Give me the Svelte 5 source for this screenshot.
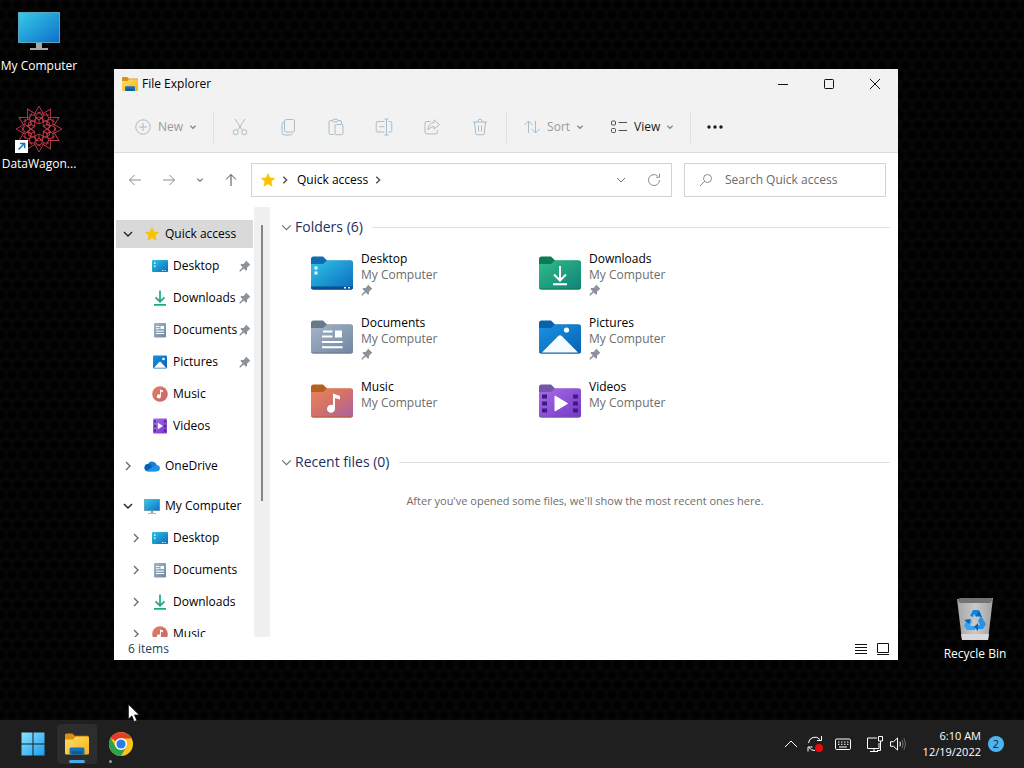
<script lang="ts">
  interface NavItem {
    label: string;
    icon: string;
    root?: boolean;
    arrow?: "open" | "closed";
    pinned?: boolean;
    selected?: boolean;
  }

  const navItems: NavItem[] = [
    { label: "Quick access", icon: "star", root: true, arrow: "open", selected: true },
    { label: "Desktop", icon: "desktop", pinned: true },
    { label: "Downloads", icon: "downloads", pinned: true },
    { label: "Documents", icon: "documents", pinned: true },
    { label: "Pictures", icon: "pictures", pinned: true },
    { label: "Music", icon: "music" },
    { label: "Videos", icon: "videos" },
    { label: "OneDrive", icon: "onedrive", root: true, arrow: "closed" },
    { label: "My Computer", icon: "computer", root: true, arrow: "open" },
    { label: "Desktop", icon: "desktop", arrow: "closed" },
    { label: "Documents", icon: "documents", arrow: "closed" },
    { label: "Downloads", icon: "downloads", arrow: "closed" },
    { label: "Music", icon: "music", arrow: "closed" },
  ];

  const folders = [
    { name: "Desktop", tab: "#0f6cae", pinned: true },
    { name: "Downloads", tab: "#0b7a55", pinned: true },
    { name: "Documents", tab: "#68798a", pinned: true },
    { name: "Pictures", tab: "#0a62ac", pinned: true },
    { name: "Music", tab: "#b5601d", pinned: false },
    { name: "Videos", tab: "#7556a5", pinned: false },
  ];

  let search = $state("");
  let active = $state(0);
</script>

{#snippet chevron(dir: string)}
  <svg class="chevron {dir}" viewBox="0 0 12 12"><path d="M2 4l4 4 4-4" /></svg>
{/snippet}

{#snippet pin()}
  <svg class="pin" viewBox="0 0 12 12">
    <path d="M7 0.5l4.5 4.5-1.3 .5-2.2 2.2 0 2.3-1 .8-2.3-2.4L1.5 11.5l-1 0 0-1L3.7 7.3 1.4 5l.8-1h2.4L6.6 1.8z" fill="#8b9299" />
  </svg>
{/snippet}

{#snippet monitor()}
  <rect x="0" y="1" width="16" height="12" rx=".6" fill="#8aa0ac" />
  <rect x=".6" y="1.5" width="14.8" height="10.9" fill="url(#g-screen)" />
  <path d="M6.8 13h2.4v2H12v.8H4V15h2.8z" fill="#9aa0a4" />
{/snippet}

{#snippet explorer()}
  <path d="M0 3.2V2q0-1 1-1h4l1.5 1.500H15q1 0 1 1V6H0z" fill="#d9920f" />
  <path d="M0 5h5.500L7 3.200h8q1 0 1 1V14q0 1-.8 1H.8Q0 15 0 14z" fill="url(#g-yellow)" />
  <path d="M3 15v-3.700q0-1 1-1h8q1 0 1 1V15z" fill="#1672b8" />
  <path d="M4.500 12.800h7V15h-7z" fill="#0d5a98" />
{/snippet}

{#snippet smallIcon(name: string)}
  <svg class="small-icon" viewBox="0 0 16 16">
    {#if name === "star"}
      <path d="M8 1.500l1.900 4.400 4.700.4-3.500 3.200 1 4.700L8 11.800l-4.100 2.400 1-4.700L1.400 6.300l4.700-.4z" fill="#f8c301" stroke="#f8c301" stroke-width=".6" stroke-linejoin="round" />
    {:else if name === "desktop"}
      <rect y="2" width="16" height="12" rx="1" fill="url(#g-desktop)" />
      <path d="M2 4.500h1.500V6H2zM2 7.500h1.500V9H2zM10 12h1.200v1H10zM12.500 12h1.200v1h-1.200z" fill="#d8f7ff" />
    {:else if name === "downloads"}
      <path d="M8 .5v11M3.500 7.300L8 11.700l4.500-4.400M2 14.900h12" fill="none" stroke="#1caa85" stroke-width="1.700" />
    {:else if name === "documents"}
      <rect x="2" y="1" width="12" height="14.500" rx="1" fill="url(#g-documents)" />
      <path d="M4 4.500h3.500M4 6.700h3.500M4 9.200h8M4 11.500h8" stroke="#fff" />
      <rect x="8.500" y="4" width="3.500" height="3.200" fill="#fff" />
    {:else if name === "pictures"}
      <rect x="1" y="1.500" width="14" height="13" rx="1" fill="url(#g-pictures)" />
      <path d="M2 13.800l5-5.600q1-1 2 0l5 5.600z" fill="#fff" />
      <circle cx="11.500" cy="5" r="1.300" fill="#fff" />
    {:else if name === "music"}
      <circle cx="8" cy="8" r="7.800" fill="url(#g-music-small)" />
      <path d="M8 3.500l3 1v1.700L8.900 5.500v4.700a2 2 0 1 1-.9-1.500z" fill="#fff" />
    {:else if name === "videos"}
      <rect x="1" y=".5" width="14" height="15" rx="1" fill="url(#g-videos)" />
      <path d="M2.200 2.500h1.600v1.700H2.200zM2.200 7.200h1.600v1.700H2.200zM2.200 11.800h1.600v1.700H2.200zM12.200 2.500h1.600v1.700h-1.600zM12.200 7.200h1.600v1.700h-1.600zM12.200 11.800h1.600v1.700h-1.600z" fill="#3c1583" />
      <path d="M5.800 4.800l5.200 3.200-5.200 3.200z" fill="#fff" />
    {:else if name === "onedrive"}
      <path d="M4 6a4.800 4.800 0 0 1 8.800 1.300 3 3 0 0 1 0 6H3.500A3.700 3.700 0 0 1 4 6z" fill="#0f80d8" />
      <path d="M3.500 13.300A3.700 3.700 0 0 1 3.700 6q1.500-.3 3 .8l5 6.500z" fill="#0a5fb5" />
      <path d="M2 12.900l7-4.400q1.700-1 3.700-1a3 3 0 0 1 .2 5.800H3.500z" fill="#2391e6" />
    {:else if name === "computer"}
      {@render monitor()}
    {/if}
  </svg>
{/snippet}

<!-- Shared gradients for every icon on the screen. -->
<svg class="defs" width="0" height="0" aria-hidden="true">
  <defs>
    <linearGradient id="g-screen" x2="1" y2="1"><stop stop-color="#34cbe8" /><stop offset="1" stop-color="#0f6fc9" /></linearGradient>
    <linearGradient id="g-yellow" x2="1" y2="1"><stop stop-color="#ffdc6b" /><stop offset="1" stop-color="#f4b41a" /></linearGradient>
    <linearGradient id="g-desktop" x2="1" y2="1"><stop stop-color="#2fc3e6" /><stop offset="1" stop-color="#0b6cbd" /></linearGradient>
    <linearGradient id="g-downloads" x2="1" y2="1"><stop stop-color="#2dbd86" /><stop offset="1" stop-color="#128279" /></linearGradient>
    <linearGradient id="g-documents" x2="1" y2="1"><stop stop-color="#a3b5c8" /><stop offset="1" stop-color="#71869f" /></linearGradient>
    <linearGradient id="g-pictures" x2="1" y2="1"><stop stop-color="#1793e2" /><stop offset="1" stop-color="#0962b2" /></linearGradient>
    <linearGradient id="g-music" x2="1" y2="1"><stop stop-color="#ea8755" /><stop offset=".5" stop-color="#d2706b" /><stop offset="1" stop-color="#a861a4" /></linearGradient>
    <linearGradient id="g-music-small" x2="1" y2="1"><stop stop-color="#e28264" /><stop offset="1" stop-color="#c8606a" /></linearGradient>
    <linearGradient id="g-videos" x2="1" y2="1"><stop stop-color="#a86cec" /><stop offset="1" stop-color="#7338c4" /></linearGradient>
    <linearGradient id="g-start" x2="1" y2="1"><stop stop-color="#8be4ff" /><stop offset="1" stop-color="#1a9df0" /></linearGradient>
    <linearGradient id="g-bin" x2="1"><stop stop-color="#a5a5a5" /><stop offset=".5" stop-color="#c9c9c9" /><stop offset="1" stop-color="#a2a2a2" /></linearGradient>
  </defs>
</svg>

<div class="screen">
  <main class="desktop">
    <button class="shortcut computer">
      <svg viewBox="0 0 48 48">
        <rect x="3" y="5" width="42" height="31" fill="#5aa7c4" />
        <rect x="4" y="6" width="40" height="29" fill="url(#g-screen)" />
        <path d="M21 36h6v5h6v2H15v-2h6z" fill="#a8a8a8" />
      </svg>
      <span>My Computer</span>
    </button>
    <button class="shortcut wagon">
      <svg viewBox="0 0 48 48">
        <g fill="none" stroke="#c23a49" stroke-width=".9">
          {#each [0, 30, 60, 90, 120, 150, 180, 210, 240, 270, 300, 330] as angle}
            <path transform="rotate({angle} 24 24)" d="M24 1l-5 9 5 5 5-5zM19 10h-5M29 10h5" />
          {/each}
          {#each [0, 60, 120, 180, 240, 300] as angle}
            <path transform="rotate({angle} 24 24)" d="M24 19l-4-2 1-4 3-1 3 1 1 4zM24 19v-4l-3-2M24 15l3-2" />
          {/each}
        </g>
        <rect y="35" width="13" height="13" fill="#fff" />
        <path d="M3.500 44.500l6-6M5 38.500h4.700v4.700" fill="none" stroke="#1278be" stroke-width="1.500" />
      </svg>
      <span>DataWagon...</span>
    </button>
    <button class="shortcut bin">
      <svg viewBox="0 0 48 48">
        <path d="M6 4l36-1-5 42H11z" fill="url(#g-bin)" />
        <path d="M6 5l3-2h31l2 2-3 3H9z" fill="#737373" />
        <path d="M10 39h28l-1 6H11z" fill="#d8d8d8" />
        <g transform="translate(0 1)">
          <path d="M19 20l3-6h5l3 5-5 2-2-3-1 3z" fill="#1485df" />
          <path d="M30 20l5 8-3 5h-5v-4h2l-2-4z" fill="#2693e8" />
          <path d="M24 34H16l-3-4 3-7 5 2-2 5h5z" fill="#39a4ee" />
          <path d="M28 14l3 7-6-1zM13 24l7-1-2 5zM27 27v8l-4-4z" fill="#0d63b8" />
        </g>
      </svg>
      <span>Recycle Bin</span>
    </button>

    <section class="window" aria-label="File Explorer">
      <header class="titlebar">
        <svg class="small-icon" viewBox="0 0 16 16">{@render explorer()}</svg>
        <h1>File Explorer</h1>
        <div class="captions">
          <button aria-label="Minimize"><svg viewBox="0 0 12 12"><path d="M1 6.500h10" /></svg></button>
          <button aria-label="Maximize"><svg viewBox="0 0 12 12"><rect x="1.500" y="1.500" width="9" height="9" rx=".8" /></svg></button>
          <button aria-label="Close"><svg viewBox="0 0 12 12"><path d="M1 1l10 10M11 1L1 11" /></svg></button>
        </div>
      </header>

      <div class="toolbar">
        <button class="tool new" disabled>
          <svg viewBox="0 0 18 18"><circle cx="9" cy="9" r="7.200" /><path d="M9 5v8M5 9h8" /></svg>
          New {@render chevron("tiny")}
        </button>
        <div class="tools">
          <button disabled aria-label="Cut"><svg viewBox="0 0 18 18"><path d="M4 1l7.500 11.500M14 1L6.500 12.500" /><circle cx="4.700" cy="14.200" r="2.500" /><circle cx="13.300" cy="14.200" r="2.500" /></svg></button>
          <button disabled aria-label="Copy"><svg viewBox="0 0 18 18"><rect x="5.500" y="1.500" width="10" height="12.500" rx="1.800" /><path d="M5.500 4Q3 4 3 6.500V14q0 3 3 3h5q2 0 2.300-1.500" /></svg></button>
          <button disabled aria-label="Paste"><svg viewBox="0 0 18 18"><path d="M7 16.500H3.500q-1.500 0-1.500-1.500V4q0-1.500 1.500-1.500h2M11 2.500h2Q14.500 2.500 14.500 4v2" /><rect x="5.500" y="1.300" width="5.500" height="2.500" rx="1.200" /><rect x="8" y="6.500" width="8" height="10.200" rx="1.300" /></svg></button>
          <button disabled aria-label="Rename"><svg viewBox="0 0 18 18"><path d="M9.500 3.500H2.700Q1.200 3.500 1.200 5v7.500Q1.200 14 2.700 14h6.800M13.500 3.500h1.800q1.500 0 1.500 1.500v7.500q0 1.500-1.500 1.500h-1.800M4 8.700h5.500" /><path d="M9.500 1h4M9.500 17h4M11.500 1v16" /></svg></button>
          <button disabled aria-label="Share"><svg viewBox="0 0 18 18"><path d="M7.500 3.500H3.700Q2 3.500 2 5.200v9q0 1.700 1.700 1.700h9q1.700 0 1.700-1.700V12" /><path d="M11 1.800l5.500 4.700-5.500 4.700V8.500Q7.500 8.500 5 12q.3-6.500 6-7.500z" stroke-linejoin="round" /></svg></button>
          <button disabled aria-label="Delete"><svg viewBox="0 0 18 18"><path d="M2 4h14M6.500 3.500Q7 1.300 9 1.300t2.500 2.200M3.500 4l1.200 11.200q.2 1.500 1.700 1.500h5.200q1.500 0 1.700-1.500L14.500 4M7.500 7.500v6M10.500 7.500v6" /></svg></button>
        </div>
        <div class="views">
          <button class="tool sort" disabled>
            <svg viewBox="0 0 18 18"><path d="M5.500 15V3M1.500 7l4-4 4 4M12.500 3v12M8.500 11l4 4 4-4" /></svg>
            Sort {@render chevron("tiny")}
          </button>
          <button class="tool">
            <svg viewBox="0 0 18 18"><rect x="1.500" y="3" width="4" height="4" rx="1" /><rect x="1.500" y="10.500" width="4" height="4" rx="1" /><path d="M8.500 4.500H17M8.500 12.500H17" /></svg>
            View {@render chevron("tiny")}
          </button>
        </div>
        <button class="more" aria-label="See more">
          <svg viewBox="0 0 18 18"><circle cx="3" cy="9" r="1.700" /><circle cx="9" cy="9" r="1.700" /><circle cx="15" cy="9" r="1.700" /></svg>
        </button>
      </div>

      <div class="navbar">
        <div class="history">
          <button disabled aria-label="Back"><svg viewBox="0 0 14 14"><path d="M13 7H1.500M6.500 2l-5 5 5 5" /></svg></button>
          <button disabled aria-label="Forward"><svg viewBox="0 0 14 14"><path d="M1 7h11.500M7.500 2l5 5-5 5" /></svg></button>
          <button class="recent" aria-label="Recent locations">{@render chevron("tiny")}</button>
          <button class="up" aria-label="Up"><svg viewBox="0 0 14 14"><path d="M7 13V1.500M2 6.500l5-5 5 5" /></svg></button>
        </div>
        <div class="address">
          {@render smallIcon("star")}
          {@render chevron("right")}
          <a href="#quick-access">Quick access</a>
          {@render chevron("right")}
          <button class="expand" aria-label="Previous locations">{@render chevron("down")}</button>
          <button aria-label="Refresh">
            <svg class="refresh" viewBox="0 0 14 14"><path d="M12.500 7a5.500 5.500 0 1 1-1.800-4M12.500 .8v3.500H9" /></svg>
          </button>
        </div>
        <label class="search">
          <svg viewBox="0 0 14 14"><circle cx="8.500" cy="5.500" r="4" /><path d="M5.600 8.400L1 13" /></svg>
          <input type="text" aria-label="Search Quick access" placeholder="Search Quick access" bind:value={search} />
        </label>
      </div>

      <div class="body">
        <nav class="sidebar">
          {#each navItems as item}
            <button class="nav-row" class:root={item.root} class:selected={item.selected}>
              <span class="arrow {item.arrow ?? ''}">
                {#if item.arrow}{@render chevron(item.arrow === "open" ? "down" : "right")}{/if}
              </span>
              {@render smallIcon(item.icon)}
              <span class="label">{item.label}</span>
              {#if item.pinned}{@render pin()}{/if}
            </button>
          {/each}
        </nav>
        <div class="scrollbar"><div class="thumb"></div></div>

        <div class="content">
          <h2>{@render chevron("down")} Folders (6)</h2>
          <div class="tiles">
            {#each folders as folder}
              <button class="tile">
                <svg class="folder" viewBox="0 0 42 34">
                  <path d="M0 3q0-2.500 2.500-2.500H12L16 4.500H39.500Q42 4.500 42 7v5H0z" fill={folder.tab} />
                  <path d="M0 8h12l4-3.500h23.500Q42 4.500 42 7v24q0 2.500-2.500 2.500h-37Q0 33.500 0 31z" fill="url(#g-{folder.name.toLowerCase()})" />
                  <path d="M0 31q0 2.500 2.500 2.500h37Q42 33.500 42 31q-.3 1.500-2.500 1.500h-37Q.3 32.500 0 31z" fill={folder.tab} />
                  {#if folder.name === "Desktop"}
                    <path d="M0 30.500h42V31q0 2.500-2.500 2.500h-37Q0 33.500 0 31z" fill="#0b4f91" />
                    <path d="M3.500 10.500h3v3h-3zM3.500 15.500h3v3h-3zM33 31h2v1.500h-2zM37 31h2v1.500h-2z" fill="#e4fbff" />
                  {:else if folder.name === "Downloads"}
                    <path d="M21 10v14M15 18.500l6 6 6-6M14 28.300h14" fill="none" stroke="#fff" stroke-width="2" />
                  {:else if folder.name === "Documents"}
                    <path d="M12 11.500h9.500M11 16.500h10.500M11 22h20.500M11 27.200h20.500" stroke="#fff" stroke-width="2" />
                    <rect x="24" y="10.500" width="7" height="7" fill="#fff" />
                  {:else if folder.name === "Pictures"}
                    <path d="M3 32.500l16-16.300q2-1.800 4 0l16 16.300z" fill="#f6fbff" />
                    <circle cx="27.500" cy="10" r="2.600" fill="#fff" />
                  {:else if folder.name === "Music"}
                    <path d="M22 9.500l7 2.500v3.500l-5-1.500v10.800a4 4 0 1 1-2-3.500z" fill="#fff" />
                  {:else}
                    <path d="M3 10.500h5v4H3zM3 17.500h5v4H3zM3 24.500h5v4H3zM34 10.500h5v4h-5zM34 17.500h5v4h-5zM34 24.500h5v4h-5z" fill="#3f1b80" />
                    <path d="M16 12l12.500 7.500L16 27z" fill="#fff" stroke="#fff" stroke-linejoin="round" />
                  {/if}
                </svg>
                <span class="info">
                  <span>{folder.name}</span>
                  <span class="where">My Computer</span>
                  {#if folder.pinned}{@render pin()}{/if}
                </span>
              </button>
            {/each}
          </div>
          <h2>{@render chevron("down")} Recent files (0)</h2>
          <p>After you've opened some files, we'll show the most recent ones here.</p>
        </div>
      </div>

      <footer class="status">
        <span>6 items</span>
        <button aria-label="Details"><svg viewBox="0 0 14 14"><path d="M1 2.500h12M1 5.500h12M1 8.500h12M1 11.500h12" /></svg></button>
        <button aria-label="Large icons"><svg viewBox="0 0 14 14"><path d="M1.500 1.500h11v9h-11zM1 12.500h12" /></svg></button>
      </footer>
    </section>

    <svg class="pointer" viewBox="0 0 12 19">
      <path d="M.5 .5v14.500l3.400-3.200 2.300 5.700 2.600-1.100-2.400-5.500h4.800z" fill="#fff" stroke="#111" stroke-width=".6" />
    </svg>
  </main>

  <footer class="taskbar">
    <button class="app" aria-label="Start">
      <svg viewBox="0 0 24 24"><path d="M.5 .5h11v11H.5zM12.500 .5h11v11h-11zM.5 12.500h11v11H.5zM12.500 12.500h11v11h-11z" fill="url(#g-start)" /></svg>
    </button>
    <button class="app" class:active={active === 0} aria-label="File Explorer" onclick={() => (active = 0)}>
      <svg viewBox="0 0 16 16">{@render explorer()}</svg>
    </button>
    <button class="app running" class:active={active === 1} aria-label="Google Chrome" onclick={() => (active = 1)}>
      <svg viewBox="0 0 24 24">
        <circle cx="12" cy="12" r="12" fill="#fcc31e" />
        <path d="M12 12L1.600 6A12 12 0 0 1 22.400 6.500H12z" fill="#e33b2e" />
        <path d="M1.600 6A12 12 0 0 0 12 24l5.200-9L12 12 6.800 15z" fill="#2ba24c" />
        <circle cx="12" cy="12" r="6" fill="#fff" />
        <circle cx="12" cy="12" r="4.600" fill="#2a7de9" />
      </svg>
    </button>
    <div class="tray">
      <button aria-label="Show hidden icons"><svg viewBox="0 0 18 18"><path d="M3 12l6-6 6 6" /></svg></button>
      <button class="updates" aria-label="Updates">
        <svg viewBox="0 0 18 18"><path d="M2.500 8A6.500 6.500 0 0 1 14 4.500M15.500 1v4.500H11M2 16.500V12h4.500M3 12.500A6.500 6.500 0 0 0 9 15.500" /><circle cx="13" cy="13" r="4" fill="#e80c10" stroke="none" /></svg>
      </button>
      <button aria-label="Touch keyboard">
        <svg viewBox="0 0 18 18"><rect x="1.500" y="4" width="15" height="10.500" rx="1.200" /><path d="M4 7h1.500M7 7h1.500M10 7h1.500M13 7h1.500M4 9.300h1.500M7 9.300h1.500M10 9.300h1.500M13 9.300h1.500M5 12h8" /></svg>
      </button>
      <button class="system" aria-label="Network and volume">
        <svg viewBox="0 0 18 18"><path d="M11 3H1.500v10.500H13V8M4 16.500h8M8 13.500v3M12.500 1.500h4v4.500h-4zM14.500 6v9.500H11" /></svg>
        <svg viewBox="0 0 18 18"><path d="M1.500 6.700v4.600h3l4 3.700V3l-4 3.700zM10.800 6.700q1.200 2.300 0 4.600" /><path d="M13 5q2.200 4 0 8M15 3.300q3 5.700 0 11.400" opacity=".35" /></svg>
      </button>
      <button class="clock"><span>6:10 AM</span><span>12/19/2022</span></button>
      <button class="badge" aria-label="2 notifications">2</button>
    </div>
  </footer>
</div>

<style>
  :global(body) {
    background: #000;
  }

  .screen {
    display: flex;
    flex-direction: column;
    height: 100vh;
    overflow: hidden;
    font-family: "Open Sans", "Noto Sans", sans-serif;
    font-size: 12px;
    line-height: 16px;
    color: #000;
  }

  .defs {
    position: absolute;
  }

  button {
    padding: 0;
    border: 0;
    background: none;
    font: inherit;
    color: inherit;
  }

  svg {
    display: block;
    flex: none;
  }

  .desktop {
    position: relative;
    flex: 1;
    min-height: 0;
    /* Perforated metal: two staggered rows of dark holes. */
    background-color: #070707;
    background-image:
      radial-gradient(circle at 6px 5px, #010101 3px, transparent 6px),
      radial-gradient(circle at 0 15px, #010101 3px, transparent 6px),
      radial-gradient(circle at 12px 15px, #010101 3px, transparent 6px);
    background-size: 12px 20px;
  }

  .shortcut {
    position: absolute;
    display: flex;
    flex-direction: column;
    align-items: center;
    gap: 3px;
    width: 78px;
    color: #fff;
    white-space: nowrap;
  }

  .shortcut svg {
    width: 48px;
    height: 48px;
  }

  .computer {
    left: 0;
    top: 7px;
  }

  .wagon {
    left: 0;
    top: 105px;
  }

  .bin {
    right: 10px;
    bottom: 58px;
  }

  .window {
    position: absolute;
    inset: 69px 126px 60px 114px;
    display: flex;
    flex-direction: column;
    background: #fff;
  }

  .titlebar {
    display: flex;
    align-items: center;
    gap: 4px;
    height: 30px;
    padding-left: 8px;
    background: #f2f2f2;
  }

  h1 {
    flex: 1;
    margin: 0;
    font-size: 12px;
    font-weight: 400;
  }

  .captions {
    display: flex;
  }

  .captions button {
    display: grid;
    place-items: center;
    width: 46px;
    height: 28px;
  }

  .captions svg {
    width: 12px;
    height: 12px;
    fill: none;
    stroke: #111;
  }

  .small-icon {
    width: 16px;
    height: 16px;
  }

  .chevron {
    width: 12px;
    height: 12px;
    fill: none;
    stroke: #6d6d6d;
  }

  .chevron.tiny {
    width: 8px;
    height: 8px;
    stroke: #8a8a8a;
    stroke-width: 2;
  }

  .chevron.right {
    transform: rotate(-90deg);
  }

  .toolbar {
    display: flex;
    align-items: center;
    height: 51px;
    padding-top: 2px;
    border-bottom: 1px solid #dcdcdc;
    background: #f2f2f2;
    color: #1b1b1b;
  }

  .toolbar svg:not(.chevron) {
    width: 18px;
    height: 18px;
    fill: none;
    stroke: #505050;
  }

  .toolbar button:disabled {
    color: #9a9a9a;
  }

  .toolbar button:disabled svg:not(.chevron) {
    stroke: #a9bcc9;
  }

  .tool {
    display: flex;
    align-items: center;
    gap: 6px;
  }

  .new {
    padding: 0 16px 0 20px;
  }

  .tools,
  .views {
    display: flex;
    align-items: center;
    height: 32px;
    border: solid #dfdfdf;
    border-width: 0 1px;
  }

  .tools {
    gap: 30px;
    padding: 0 17px;
  }

  .views {
    gap: 26px;
    padding: 0 16px;
    border-left: 0;
  }

  .more {
    padding: 0 15px;
  }

  .toolbar .more svg {
    fill: #1b1b1b;
    stroke: none;
  }

  .navbar {
    display: flex;
    align-items: center;
    gap: 9px;
    padding: 10px 12px 10px 10px;
  }

  .history {
    display: flex;
    align-items: center;
    gap: 12px;
  }

  .history button {
    display: grid;
    place-items: center;
    width: 22px;
    height: 22px;
  }

  .history .recent {
    width: 16px;
  }

  .navbar svg:not(.chevron, .small-icon) {
    width: 14px;
    height: 14px;
    fill: none;
    stroke: #8b8b8b;
  }

  .navbar .up svg:not(.chevron) {
    stroke: #4a4a4a;
  }

  .address {
    display: flex;
    flex: 1;
    align-items: center;
    gap: 4px;
    box-sizing: border-box;
    height: 34px;
    padding: 0 10px 0 8px;
    border: 1px solid #d3d3d3;
  }

  .address .chevron.right {
    width: 10px;
    height: 10px;
    stroke: #4a4a4a;
    stroke-width: 1.6;
  }

  .address a {
    padding: 0 1px 0 3px;
    color: #000;
    text-decoration: none;
  }

  .expand {
    margin: 0 16px 0 auto;
  }

  .search {
    display: flex;
    align-items: center;
    gap: 12px;
    box-sizing: border-box;
    width: 202px;
    height: 34px;
    margin-left: 3px;
    padding: 0 14px;
    border: 1px solid #d3d3d3;
  }

  .search input {
    flex: 1;
    min-width: 0;
    padding: 0;
    border: 0;
    outline: 0;
    background: none;
    font: inherit;
  }

  .search input::placeholder {
    color: #6a6a6a;
    opacity: 1;
  }

  .body {
    display: flex;
    flex: 1;
    min-height: 0;
  }

  .sidebar {
    display: flex;
    flex-direction: column;
    gap: 4px;
    width: 137px;
    padding: 13px 1px 0 2px;
    overflow: hidden;
  }

  .nav-row {
    display: flex;
    flex: none;
    align-items: center;
    gap: 5px;
    height: 28px;
    padding: 0 2px 0 14px;
    text-align: left;
    white-space: nowrap;
  }

  .nav-row.root {
    padding-left: 6px;
  }

  .nav-row.root:not(:first-child) {
    margin-top: 8px;
  }

  .nav-row.selected {
    background: #d9d9d9;
  }

  .arrow {
    flex: none;
    width: 17px;
    height: 12px;
  }

  .arrow .chevron {
    stroke-width: 1.4;
  }

  .open .chevron {
    stroke: #222;
  }

  .label {
    flex: 1;
    min-width: 0;
  }

  .pin {
    width: 12px;
    height: 12px;
  }

  .scrollbar {
    box-sizing: border-box;
    width: 16px;
    padding: 18px 7px 0;
    background: #f0f0f0;
  }

  .thumb {
    height: 67%;
    background: #858585;
  }

  .content {
    flex: 1;
    min-width: 0;
    padding: 8px 8px 0 10px;
  }

  h2 {
    display: flex;
    align-items: center;
    gap: 2px;
    height: 24px;
    margin: 0;
    font-size: 14px;
    font-weight: 400;
    color: #22305f;
  }

  h2 .chevron {
    width: 13px;
    height: 13px;
  }

  h2::after {
    content: "";
    flex: 1;
    height: 1px;
    margin-left: 7px;
    background: #e0e0e0;
  }

  .tiles {
    display: grid;
    grid-template-columns: repeat(auto-fill, 212px);
    gap: 16px;
    padding: 12px 30px 23px 31px;
  }

  .tile {
    display: flex;
    gap: 8px;
    height: 48px;
    text-align: left;
  }

  .folder {
    width: 42px;
    height: 34px;
    margin-top: 5px;
  }

  .info {
    display: flex;
    flex-direction: column;
  }

  .info .pin {
    margin-top: 1px;
  }

  .where,
  p {
    color: #6d6d6d;
  }

  p {
    margin: 19px 0 0;
    font-size: 11px;
    text-align: center;
  }

  .status {
    display: flex;
    align-items: center;
    gap: 8px;
    height: 23px;
    padding: 0 8px 0 14px;
    color: #24405c;
  }

  .status span {
    flex: 1;
  }

  .status svg {
    width: 14px;
    height: 14px;
    fill: none;
    stroke: #111;
  }

  .pointer {
    position: absolute;
    left: 128px;
    top: 704px;
    width: 12px;
    height: 19px;
  }

  .taskbar {
    display: flex;
    align-items: center;
    gap: 4px;
    height: 48px;
    padding: 0 20px 0 13px;
    background: #1f1f1f;
    color: #fff;
  }

  .app {
    position: relative;
    display: grid;
    place-items: center;
    width: 40px;
    height: 40px;
    border-radius: 4px;
  }

  .app svg {
    width: 24px;
    height: 24px;
  }

  .app.active {
    background: #2d2d2d;
  }

  .app.active::after,
  .app.running::after {
    content: "";
    position: absolute;
    bottom: 1px;
    left: 12px;
    width: 16px;
    height: 3px;
    border-radius: 2px;
    background: #4aa8e8;
  }

  .app.running:not(.active)::after {
    left: 8px;
    width: 3px;
    background: #9a9a9a;
  }

  .tray {
    display: flex;
    align-items: center;
    margin-left: auto;
  }

  .tray svg {
    width: 18px;
    height: 18px;
    fill: none;
    stroke: #fff;
  }

  .tray > button {
    margin-right: 6px;
  }

  .tray > .updates {
    margin-right: 10px;
  }

  .system {
    display: flex;
    gap: 5px;
  }

  .tray > .system {
    margin: 0 16px 0 8px;
  }

  .tray > .clock {
    display: flex;
    flex-direction: column;
    margin-right: 7px;
    font-size: 11px;
    text-align: right;
  }

  .tray > .badge {
    width: 16px;
    height: 16px;
    margin: 0;
    border-radius: 50%;
    background: #4cb5f0;
    font-size: 11px;
    color: #10202c;
  }
</style>
